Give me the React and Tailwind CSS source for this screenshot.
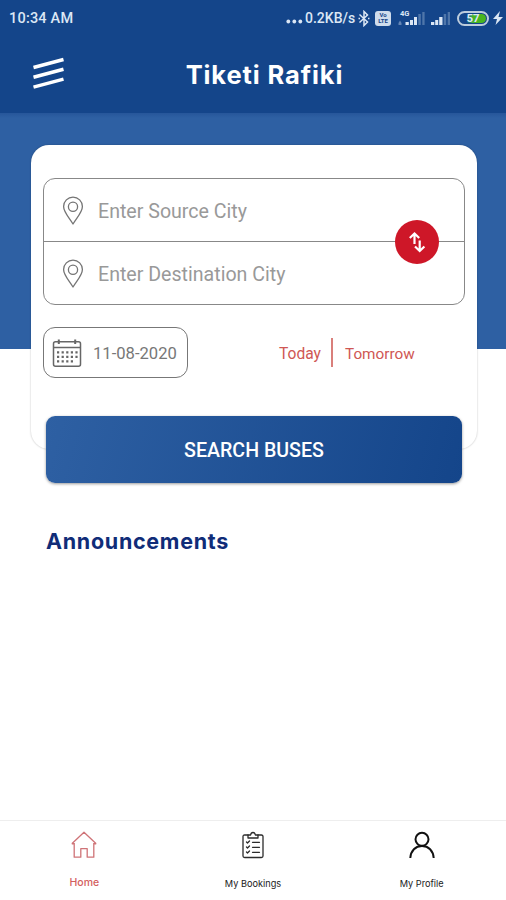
import React, { useState } from 'react';

const tabs = [
    { id: 'home', label: 'Home', Icon: HomeIcon },
    { id: 'bookings', label: 'My Bookings', Icon: BookingsIcon },
    { id: 'profile', label: 'My Profile', Icon: ProfileIcon },
];

function HomeIcon() {
    return (
        <svg width="26" height="28" viewBox="0 0 26 28" fill="none" stroke="#cf7377" strokeWidth="1.3" strokeLinejoin="round">
            <path d="M.8 12.8 13 1.2l12.2 11.6M3.2 12v14.2h6.6v-8.6h6.4v8.6h6.6V12M.8 12.8h2.4M22.8 12.8h2.4" />
        </svg>
    );
}

function BookingsIcon() {
    return (
        <svg width="22" height="28" viewBox="0 0 22 28" fill="none" stroke="#2b2b2b" strokeWidth="1.3" strokeLinecap="round" strokeLinejoin="round">
            <path d="M6 4H2.6Q1 4 1 5.6V25Q1 26.5 2.6 26.5H19.4Q21 26.5 21 25V5.6Q21 4 19.4 4H16" />
            <path d="M6 7V4h2.6Q9 1.5 11 1.5T13.4 4H16v3z" />
            <path d="m4.5 11 1 1 2-2M4.5 16l1 1 2-2M4.5 21l1 1 2-2M10.5 11.3h7M10.5 16.3h7M10.5 21.3h7" />
        </svg>
    );
}

function ProfileIcon() {
    return (
        <svg width="26" height="28" viewBox="0 0 26 28" fill="none" stroke="#111" strokeWidth="2">
            <circle cx="13" cy="8.3" r="6.5" />
            <path d="M1.3 27C1.8 19.5 6.5 15 13 15s11.2 4.5 11.7 12" />
        </svg>
    );
}

function PinIcon() {
    return (
        <svg width="22" height="30" viewBox="0 0 22 30" fill="none" stroke="#747474" strokeWidth="1.3" strokeLinejoin="round">
            <path d="M11 28C8 22.5 1.6 16.500 1.6 10.500a9.400 9.400 0 0 1 18.800 0C20.400 16.500 14 22.500 11 28z" />
            <circle cx="11" cy="10.8" r="4.6" />
        </svg>
    );
}

function CalendarIcon() {
    return (
        <svg width="30" height="30" viewBox="0 0 30 30" fill="none" stroke="#666" strokeWidth="1.5">
            <rect x="1.5" y="3.8" width="27" height="24.4" rx="2" />
            <path d="M1.5 9.5h27" />
            <path d="M6.8 1.5V6M23.2 1.5V6" strokeWidth="2" />
            <path d="M5 14.3h21M5 18.8h21M5 23.3h16" strokeWidth="2.2" strokeDasharray="2.2 2.4" />
        </svg>
    );
}

function SwapIcon() {
    return (
        <svg width="18" height="24" viewBox="0 0 18 24" fill="none" stroke="#fff" strokeWidth="2.2">
            <path d="M6.5 14V4M1.8 8l4.7-4.5L11.2 8M11.7 10.5v10M7 16.5l4.7 4.5 4.7-4.5" />
        </svg>
    );
}

function StatusBar() {
    return (
        <div className="flex h-9 items-center pl-[9px] pr-[3px] text-[#dce7f5]">
            <span className="w-[70px] whitespace-nowrap pt-px text-[14.5px] font-medium tracking-[0.2px]">10:34 AM</span>
            <svg className="ml-auto mr-[2px] mt-[7px]" width="17" height="5" viewBox="0 0 17 5" fill="currentColor">
                <circle cx="2.3" cy="2.5" r="1.9" />
                <circle cx="8.3" cy="2.5" r="1.9" />
                <circle cx="14.3" cy="2.5" r="1.9" />
            </svg>
            <span className="w-[51px] whitespace-nowrap text-[14px] font-medium">0.2KB/s</span>
            <svg className="ml-[2px]" width="12" height="17" viewBox="0 0 12 17" fill="none" stroke="currentColor" strokeWidth="1.5">
                <path d="m1.5 4.5 8 7.5L6 15.5v-14L9.5 5l-8 7.5M.5 8.5H2M10 8.5h1.5" />
            </svg>
            <div className="ml-[5px] flex h-[15px] w-[16px] flex-col items-center justify-center rounded-[3px] bg-[#cfdcec] text-[6px] font-bold leading-[6px] text-[#14458a]">
                <span>Vo</span>
                <span>LTE</span>
            </div>
            <svg className="ml-[7px]" width="27" height="18" viewBox="0 0 27 18" fill="currentColor">
                <text x="2" y="7" fontSize="7.5" fontWeight="700">4G</text>
                <path d="M.5 14 2 11.5 3.5 14v2h-3z" opacity=".4" />
                <path d="M7.500 13h3.300v3H7.500zM12 11h3v5h-3zM16 8h3v8h-3z" />
                <path d="M20.300 5h2.500v11h-2.500zM24.300 3h2.300v13h-2.300z" opacity=".3" />
            </svg>
            <svg className="ml-[6px]" width="20" height="18" viewBox="0 0 20 18" fill="currentColor">
                <path d="M0 13h3.300v3H0zM4.200 11h3v5h-3zM8.200 8h3.300v8H8.200z" />
                <path d="M12.700 5h2.500v11h-2.500zM16.700 3h2.300v13h-2.300z" opacity=".3" />
            </svg>
            <div className="ml-[6px] flex h-[15px] w-[32px] items-center rounded-full border-2 border-[#bdcddd] p-px">
                <div className="flex h-full w-full items-center justify-center rounded-full bg-linear-to-r from-[#14458a] from-25% to-[#48b51f] to-50% pt-px text-[11.5px] font-bold leading-none">57</div>
            </div>
            <svg className="ml-[4px]" width="10" height="14" viewBox="0 0 10 14" fill="currentColor">
                <path d="M7 0 0 8h4l-1.5 6L10 6H5.5z" />
            </svg>
        </div>
    );
}

const CityInput = ({ name, value, placeholder, onChange }) => (
    <label className="flex h-[63px] items-center pl-[18px]">
        <PinIcon />
        <input
            type="text"
            name={name}
            value={value}
            onChange={onChange}
            placeholder={placeholder}
            className="ml-[14px] w-[260px] pt-[3px] text-[19.6px] text-[#666] outline-none placeholder:text-[#999]"
        />
    </label>
);

export default function App() {
    const [search, setSearch] = useState({ source: '', destination: '', date: '11-08-2020' });
    const [activeTab, setActiveTab] = useState('home');

    const handleChange = (e) => {
        const { name, value } = e.target;
        setSearch(prev => ({ ...prev, [name]: value }));
    };

    const handleSwap = () => {
        setSearch(prev => ({ ...prev, source: prev.destination, destination: prev.source }));
    };

    return (
        <div className="flex h-[900px] w-full flex-col overflow-hidden bg-white font-['Roboto',sans-serif]">
            <header className="h-[113px] shrink-0 bg-[#14458a]">
                <StatusBar />
                <div className="grid h-[77px] grid-cols-[64px_1fr_41px] items-center">
                    <button className="pl-[33px]" aria-label="Menu">
                        <svg className="-mt-[3px]" width="31" height="32" viewBox="0 0 31 32" stroke="#fff" strokeWidth="3.5">
                            <path d="M.5 10.5l30-8M.5 20.3l30-8M.5 30.1l30-8" />
                        </svg>
                    </button>
                    <h1 className="whitespace-nowrap pt-px text-center font-['Inter',sans-serif] text-[25.5px] font-bold tracking-[0.9px] text-white">Tiketi Rafiki</h1>
                </div>
            </header>

            <main className="flex-1">
                <section className="h-[236px] bg-linear-to-b from-[#26569a] to-[#2e60a3] to-[5px] pl-[31px] pr-[29px] pt-[32px]">
                    <div className="h-[304px] rounded-[18px] bg-white px-3 pt-[33px] shadow-[0_0_2px_rgba(0,0,0,0.28)]">
                        <div className="relative h-[127px] rounded-[12px] border border-[#888]">
                            <CityInput name="source" value={search.source} placeholder="Enter Source City" onChange={handleChange} />
                            <div className="-mt-px h-px bg-[#888]" />
                            <CityInput name="destination" value={search.destination} placeholder="Enter Destination City" onChange={handleChange} />
                            <button
                                onClick={handleSwap}
                                aria-label="Swap cities"
                                className="absolute right-[25px] top-[41px] flex size-[44px] items-center justify-center rounded-full bg-[#ce1728]"
                            >
                                <SwapIcon />
                            </button>
                        </div>

                        <div className="mt-[22px] flex h-[51px] items-center">
                            <button className="flex h-full w-[145px] items-center rounded-[12px] border border-[#777] pl-[8px]">
                                <CalendarIcon />
                                <span className="ml-[11px] whitespace-nowrap pt-[4px] text-[16.6px] text-[#777]">{search.date}</span>
                            </button>
                            <button className="ml-[91px] w-[43px] whitespace-nowrap pt-[4px] text-left text-[15.6px] text-[#cf5754]">Today</button>
                            <div className="ml-[9px] h-[29px] w-[2px] bg-[#d97f7b]" />
                            <button className="ml-[12px] w-[70px] whitespace-nowrap pt-[3px] text-left text-[15.3px] text-[#cf5754]">Tomorrow</button>
                        </div>

                        <button className="ml-[3px] mt-[38px] h-[67px] w-[416px] rounded-[9px] bg-linear-[105deg] from-[#2e60a3] to-[#14458a] pt-[3px] text-[19.6px] font-medium text-white shadow-[0_1px_3px_rgba(0,0,0,0.4)]">
                            SEARCH BUSES
                        </button>
                    </div>
                </section>

                <section className="px-[46px] pt-[178px]">
                    <h2 className="font-['Inter',sans-serif] text-[21.5px] font-bold leading-7 tracking-[0.7px] text-[#102c78]">Announcements</h2>
                </section>
            </main>

            <nav className="grid h-[80px] grid-cols-3 border-t border-[#eee]">
                {tabs.map(({ id, label, Icon }) => (
                    <button key={id} onClick={() => setActiveTab(id)} className="flex flex-col items-center pt-[10px]">
                        <Icon />
                        <span
                            className={`mt-[16px] whitespace-nowrap font-['Inter',sans-serif] leading-4 ${
                                activeTab === id ? 'text-[10.5px] font-medium text-[#d3605e]' : 'pt-px text-[9.2px] text-[#222]'
                            }`}
                        >
                            {label}
                        </span>
                    </button>
                ))}
            </nav>
        </div>
    );
}
